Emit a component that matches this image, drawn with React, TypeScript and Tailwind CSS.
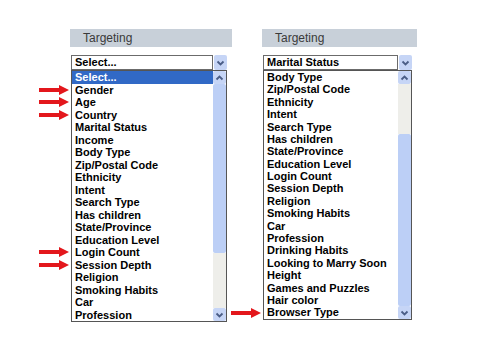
import React from "react";

const LEFT_ITEMS = [
  "Select...",
  "Gender",
  "Age",
  "Country",
  "Marital Status",
  "Income",
  "Body Type",
  "Zip/Postal Code",
  "Ethnicity",
  "Intent",
  "Search Type",
  "Has children",
  "State/Province",
  "Education Level",
  "Login Count",
  "Session Depth",
  "Religion",
  "Smoking Habits",
  "Car",
  "Profession",
];

const RIGHT_ITEMS = [
  "Body Type",
  "Zip/Postal Code",
  "Ethnicity",
  "Intent",
  "Search Type",
  "Has children",
  "State/Province",
  "Education Level",
  "Login Count",
  "Session Depth",
  "Religion",
  "Smoking Habits",
  "Car",
  "Profession",
  "Drinking Habits",
  "Looking to Marry Soon",
  "Height",
  "Games and Puzzles",
  "Hair color",
  "Browser Type",
];

function Chevron({ up = false }: { up?: boolean }) {
  return (
    <svg width="9" height="6" viewBox="0 0 9 6">
      <polyline
        points={up ? "1.5,4.5 4.5,1.5 7.5,4.5" : "1.5,1.5 4.5,4.5 7.5,1.5"}
        fill="none"
        stroke="#4a5d86"
        strokeWidth="1.8"
      />
    </svg>
  );
}

function RedArrow() {
  return (
    <svg width="31" height="10" viewBox="0 0 31 10">
      <rect x="0" y="3" width="22" height="4" fill="#e3171c" />
      <polygon points="20,0 30,5 20,10" fill="#e3171c" />
    </svg>
  );
}

function ArrowButton({ up = false }: { up?: boolean }) {
  return (
    <div className="flex h-[13px] items-center justify-center rounded-[2px] bg-[#c6d5f6]">
      <Chevron up={up} />
    </div>
  );
}

type PanelProps = {
  width: string;
  value: string;
  items: string[];
  rowHeight: string;
  marked: string[];
  highlight?: string;
  scroll: { track1: string; thumb: string; track2: string };
};

function Panel({ width, value, items, rowHeight, marked, highlight, scroll }: PanelProps) {
  return (
    <div className={`flex flex-col ${width}`}>
      <div className="flex h-[18px] items-center bg-[#c8d0d9] pl-[13px] text-[12px] text-[#3a3a3a]">
        Targeting
      </div>
      <div className="mt-[8px] ml-[1px] mr-[5px] flex h-[15px]">
        <div className="flex flex-1 items-center border border-[#6b6b6b] bg-white pl-[3px] text-[11px] font-bold leading-none text-black">
          {value}
        </div>
        <div className="ml-px flex w-[13px] items-center justify-center rounded-[2px] bg-[#c6d5f6]">
          <Chevron />
        </div>
      </div>
      <div className="ml-[1px] mr-[5px] flex border border-[#555555] bg-white">
        <div className="flex flex-1 flex-col">
          {items.map((item) => (
            <div
              key={item}
              className={`relative flex items-center pl-[3px] text-[11px] font-bold ${rowHeight} ${
                item === highlight ? "bg-[#3169c6] text-white" : "text-black"
              }`}
            >
              {marked.includes(item) && (
                <span className="absolute left-[-33px] top-1/2 -translate-y-1/2 leading-none">
                  <RedArrow />
                </span>
              )}
              {item}
            </div>
          ))}
        </div>
        <div className="flex w-[13px] flex-col">
          <ArrowButton up />
          <div className={`${scroll.track1} bg-[#eeeeea]`} />
          <div className={`${scroll.thumb} rounded-[2px] bg-[#bccff6]`} />
          <div className={`${scroll.track2} bg-[#eeeeea]`} />
          <ArrowButton />
        </div>
      </div>
    </div>
  );
}

export default function App() {
  return (
    <div className="h-[360px] w-[480px] overflow-hidden bg-white font-['Liberation_Sans',Arial,sans-serif]">
      <div className="flex pt-[29px]">
        <div className="ml-[70px]">
          <Panel
            width="w-[162px]"
            value="Select..."
            items={LEFT_ITEMS}
            rowHeight="h-[12.5px]"
            highlight="Select..."
            marked={["Gender", "Age", "Country", "Login Count", "Session Depth"]}
            scroll={{ track1: "h-0", thumb: "h-[169px]", track2: "h-[55px]" }}
          />
        </div>
        <div className="ml-[30px]">
          <Panel
            width="w-[155px]"
            value="Marital Status"
            items={RIGHT_ITEMS}
            rowHeight="h-[12.4px]"
            marked={["Browser Type"]}
            scroll={{ track1: "h-[50px]", thumb: "h-[172px]", track2: "h-0" }}
          />
        </div>
      </div>
    </div>
  );
}
